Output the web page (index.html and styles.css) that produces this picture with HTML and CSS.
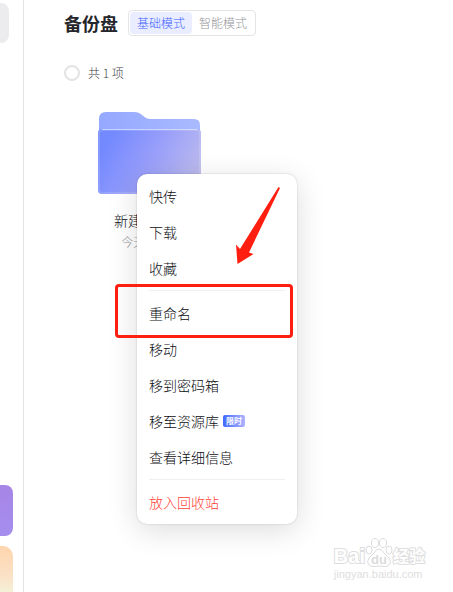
FILE: index.html
```
<!DOCTYPE html>
<html lang="zh-CN">
<head>
  <meta charset="UTF-8">
  <title>备份盘</title>
  <link rel="stylesheet" href="styles.css">
</head>
<body>
  <!-- 侧边栏 -->
  <aside class="sidebar">
    <div class="side-tab"></div>
    <div class="side-card side-card-purple"></div>
    <div class="side-card side-card-orange"></div>
  </aside>

  <!-- 主内容 -->
  <main class="main">
    <header class="title-row">
      <h1 class="title">备份盘</h1>
      <div class="mode-switch">
        <button type="button" class="mode-btn active">基础模式</button>
        <button type="button" class="mode-btn">智能模式</button>
      </div>
    </header>
    <label class="count-row">
      <input type="checkbox" class="check-all">
      <span>共 1 项</span>
    </label>
    <div class="file-item">
      <svg class="folder" width="104" height="83" viewBox="0 0 104 83" aria-hidden="true">
        <defs>
          <linearGradient id="folderBack" x1="0" y1="0" x2="1" y2="0">
            <stop offset="0" stop-color="#94a8ff"/>
            <stop offset="1" stop-color="#a9baff"/>
          </linearGradient>
          <linearGradient id="folderFront" gradientUnits="userSpaceOnUse" x1="12" y1="26" x2="96" y2="72">
            <stop offset="0" stop-color="#7389ff"/>
            <stop offset="0.5" stop-color="#999ffa"/>
            <stop offset="1" stop-color="#bdbbee"/>
          </linearGradient>
        </defs>
        <path d="M2 30V7q0-7 7-7h28q5 0 8 3l4 3q2 1 5 1h43q6 0 6 6v17z" fill="url(#folderBack)"/>
        <rect x="1" y="17" width="103" height="65" rx="4" fill="url(#folderFront)"/>
        <rect x="2" y="18" width="101" height="63" rx="4" fill="none" stroke="#fff" stroke-opacity="0.14" stroke-width="2"/>
        <path d="M5 17.500H100" stroke="#dbe4ff" stroke-opacity="0.75"/>
      </svg>
      <div class="file-name">新建文件夹</div>
      <div class="file-time">今天 10:20</div>
    </div>
  </main>

  <!-- 右键菜单 -->
  <ul class="menu">
    <li><button type="button" class="menu-item">快传</button></li>
    <li><button type="button" class="menu-item">下载</button></li>
    <li><button type="button" class="menu-item">收藏</button></li>
    <li class="menu-line"></li>
    <li><button type="button" class="menu-item">重命名</button></li>
    <li><button type="button" class="menu-item">移动</button></li>
    <li><button type="button" class="menu-item">移到密码箱</button></li>
    <li><button type="button" class="menu-item">移至资源库<span class="tag">限时</span></button></li>
    <li><button type="button" class="menu-item">查看详细信息</button></li>
    <li class="menu-line"></li>
    <li><button type="button" class="menu-item danger">放入回收站</button></li>
  </ul>

  <!-- 标注 -->
  <div class="mark-box"></div>
  <svg class="mark-arrow" width="46" height="80" viewBox="0 0 46 80" aria-hidden="true">
    <path d="M43.500 2L45 3L14 67.500L18.500 69L2.500 79L1 59.500L5 64z" fill="#ff1f10"/>
  </svg>

  <!-- 水印 -->
  <div class="watermark">
    <div class="wm-logo">
      <span class="wm-bai">Bai</span>
      <svg class="wm-paw" width="28" height="30" viewBox="0 0 28 30" aria-hidden="true">
        <g fill="#fff" stroke="#dcdcdc">
          <ellipse cx="4" cy="12" rx="3" ry="4"/>
          <ellipse cx="10" cy="5" rx="3.500" ry="4.500"/>
          <ellipse cx="18" cy="5" rx="3.500" ry="4.500"/>
          <ellipse cx="24" cy="12" rx="3" ry="4"/>
          <path d="M14 11q3 0 5 4l5 5q3 4 0 7q-2 2-5 1.500q-5-1-10 0q-3 .5-5-1.500q-3-3 0-7l5-5q2-4 5-4z"/>
        </g>
        <text class="wm-du" x="14" y="26" text-anchor="middle">du</text>
      </svg>
      <span class="wm-cn">经验</span>
    </div>
    <div class="wm-url">jingyan.baidu.com</div>
  </div>
</body>
</html>
```

FILE: styles.css
```
* {
  box-sizing: border-box;
}
body {
  margin: 0;
  height: 100vh;
  display: flex;
  position: relative;
  overflow: hidden;
  background: #fff;
  color: #0c0d12;
  font-family: "Noto Sans CJK SC", sans-serif;
  font-size: 14px;
  font-weight: 300;
}
button {
  border: none;
  background: none;
  font-family: inherit;
  font-weight: inherit;
  cursor: pointer;
}

/* 侧边栏 */
.sidebar {
  flex: none;
  width: 24px;
  height: 100%;
  padding-top: 3px;
  border-right: 1px solid #e3e3e5;
  display: flex;
  flex-direction: column;
  overflow: hidden;
}
.side-tab {
  width: 9px;
  height: 40px;
  border-radius: 0 8px 8px 0;
  background: #ececee;
}
.side-card {
  flex: none;
  width: 13px;
  height: 51px;
  border-radius: 0 8px 8px 0;
}
.side-card-purple {
  margin-top: auto;
  margin-bottom: 10px;
  background: linear-gradient(#a685e6, #a58eee);
}
.side-card-orange {
  height: 46px;
  border-radius: 0 10px 0 0;
  background: linear-gradient(#ffd5ae, #fbe0c4 60%, #f4f0d8);
}

/* 主内容 */
.main {
  flex: 1;
  padding: 10px 40px;
}
.title-row {
  display: flex;
  align-items: center;
  gap: 10px;
}
.title {
  margin: 0;
  font-size: 18px;
  line-height: 24px;
  font-weight: bold;
  color: #25262b;
}
.mode-switch {
  display: flex;
  height: 26px;
  padding: 1px;
  border: 1px solid #e4e4e6;
  border-radius: 4px;
}
.mode-btn {
  padding: 0 7px;
  border-radius: 4px;
  font-size: 12px;
  line-height: 22px;
  color: #949498;
}
.mode-btn.active {
  background: #e9edff;
  color: #4060ff;
}
.count-row {
  display: flex;
  align-items: center;
  gap: 8px;
  margin-top: 28px;
  font-size: 12px;
  line-height: 18px;
  color: #3c3d42;
}
.check-all {
  appearance: none;
  width: 16px;
  height: 16px;
  margin: 0;
  border: 2px solid #e3e3e5;
  border-radius: 50%;
}
.file-item {
  width: 170px;
  margin-top: 30px;
  display: flex;
  flex-direction: column;
  align-items: center;
  text-align: center;
}
.file-name {
  margin-top: 14px;
  line-height: 22px;
}
.file-time {
  margin-top: 1px;
  font-size: 12px;
  line-height: 20px;
  color: #a0a0a4;
}

/* 右键菜单 */
.menu {
  position: absolute;
  left: 137px;
  top: 174px;
  width: 160px;
  margin: 0;
  padding: 5px 0 3px;
  list-style: none;
  background: #fff;
  border-radius: 10px;
  box-shadow: 0 0 2px rgba(0, 0, 0, 0.2), 0 6px 30px rgba(0, 0, 0, 0.14);
}
.menu-item {
  display: flex;
  align-items: center;
  width: 100%;
  height: 36px;
  padding: 0 12px 2px;
  font-size: 14px;
  color: #0c0d12;
}
.menu-item.danger {
  color: #ff4238;
}
.menu-line {
  height: 1px;
  margin: 3px 12px 5px;
  background: #f0f0f1;
}
.tag {
  margin-left: 4px;
  padding: 0 3px;
  border-radius: 2px;
  background: linear-gradient(90deg, #4169ff, #b0b4ff);
  color: #fff;
  font-size: 8px;
  line-height: 12px;
  font-weight: bold;
}

/* 标注 */
.mark-box {
  position: absolute;
  left: 115px;
  top: 284px;
  width: 178px;
  height: 54px;
  border: 3px solid #ff1f10;
  border-radius: 4px;
}
.mark-arrow {
  position: absolute;
  left: 235px;
  top: 185px;
}

/* 水印 */
.watermark {
  position: absolute;
  right: 28px;
  bottom: 11px;
  color: #fff;
  font-family: "Liberation Sans", "Noto Sans CJK SC", sans-serif;
  font-weight: normal;
  -webkit-text-stroke: 2px #dedede;
  paint-order: stroke fill;
}
.wm-logo {
  display: flex;
  align-items: flex-end;
  height: 30px;
}
.wm-bai {
  font-size: 20px;
  line-height: 24px;
  font-weight: bold;
}
.wm-paw {
  paint-order: normal;
}
.wm-cn {
  font-size: 16px;
  line-height: 22px;
  font-weight: bold;
}
.wm-du {
  fill: #dcdcdc;
  font-size: 13px;
  font-weight: bold;
  -webkit-text-stroke: 0;
}
.wm-url {
  font-size: 11px;
  line-height: 13px;
  color: #dedede;
  -webkit-text-stroke: 0;
}
```
